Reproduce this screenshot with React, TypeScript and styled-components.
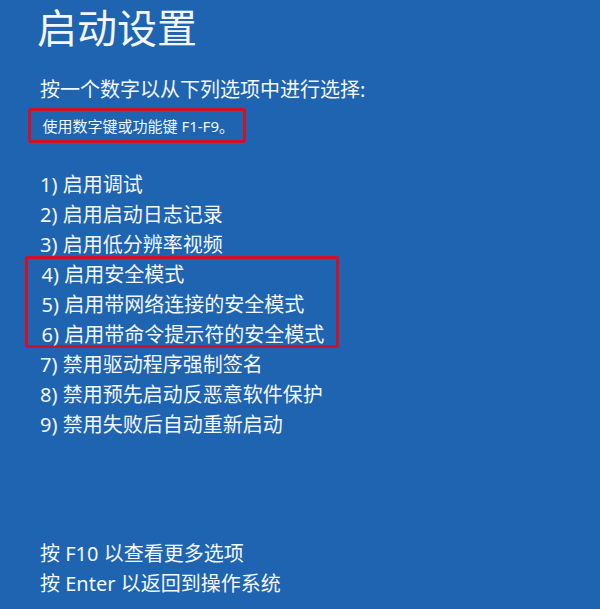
import React from "react";
import styled, { createGlobalStyle } from "styled-components";

const GlobalStyle = createGlobalStyle`
  html, body {
    margin: 0;
    padding: 0;
    background: #1e64b0;
  }
  * {
    box-sizing: border-box;
  }
`;

const Screen = styled.div`
  width: 600px;
  height: 609px;
  background: #1e64b0;
  color: #f4f7fb;
  font-family: "Noto Sans", "Noto Sans CJK SC", sans-serif;
  padding: 4px 0 0 40px;
  overflow: hidden;
`;

const Title = styled.h1`
  margin: 0 0 0 -3px;
  font-size: 40px;
  font-weight: 400;
  line-height: 48px;
`;

const Prompt = styled.div`
  margin-top: 23px;
  font-size: 20px;
  line-height: 30px;
`;

const Highlight = styled.div<{ $width: number }>`
  border: 3.5px solid #cf1126;
  border-radius: 3px;
  width: ${(p) => p.$width}px;
`;

const KeyHint = styled(Highlight)`
  margin: 3px 0 0 -12px;
  height: 35px;
  padding: 3px 0 0 11.5px;
  font-size: 15px;
  line-height: 25px;
`;

const OptionList = styled.div`
  margin-top: 27px;
  display: flex;
  flex-direction: column;
`;

const Option = styled.div`
  font-size: 20px;
  line-height: 30px;
  white-space: nowrap;
`;

const OptionGroup = styled(Highlight)`
  height: 92px;
  margin: -4px 0 2px -15px;
  padding: 0.5px 0 0 13.5px;
  border-width: 3px;
`;

const Footer = styled.div`
  margin-top: 99px;
  display: flex;
  flex-direction: column;
`;

const FooterLine = styled.div`
  font-size: 20px;
  line-height: 30px;
`;

const before = ["1) 启用调试", "2) 启用启动日志记录", "3) 启用低分辨率视频"];
const boxed = ["4) 启用安全模式", "5) 启用带网络连接的安全模式", "6) 启用带命令提示符的安全模式"];
const after = ["7) 禁用驱动程序强制签名", "8) 禁用预先启动反恶意软件保护", "9) 禁用失败后自动重新启动"];

export default function App() {
  return (
    <>
      <GlobalStyle />
      <Screen>
        <Title>启动设置</Title>
        <Prompt>按一个数字以从下列选项中进行选择:</Prompt>
        <KeyHint $width={218}>使用数字键或功能键 F1-F9。</KeyHint>
        <OptionList>
          {before.map((t) => (
            <Option key={t}>{t}</Option>
          ))}
          <OptionGroup $width={314}>
            {boxed.map((t) => (
              <Option key={t}>{t}</Option>
            ))}
          </OptionGroup>
          {after.map((t) => (
            <Option key={t}>{t}</Option>
          ))}
        </OptionList>
        <Footer>
          <FooterLine>按 F10 以查看更多选项</FooterLine>
          <FooterLine>按 Enter 以返回到操作系统</FooterLine>
        </Footer>
      </Screen>
    </>
  );
}
